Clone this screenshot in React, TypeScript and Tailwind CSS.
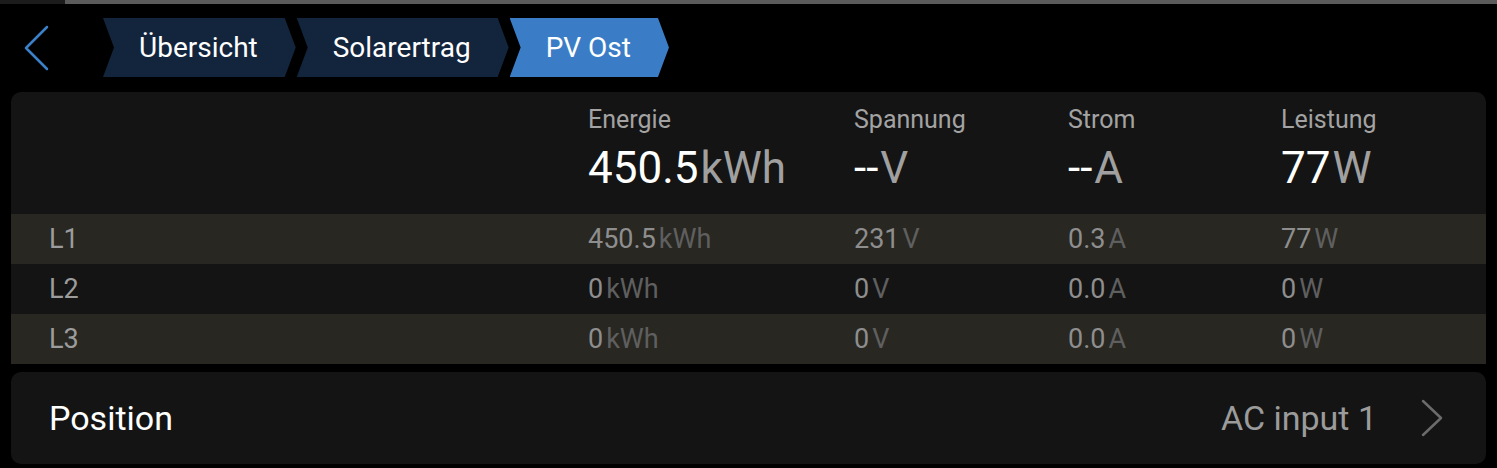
const CRUMBS = [
  { label: 'Übersicht', active: false },
  { label: 'Solarertrag', active: false },
  { label: 'PV Ost', active: true },
]

const COLS = [
  { label: 'Energie', value: '450.5', unit: 'kWh' },
  { label: 'Spannung', value: '--', unit: 'V' },
  { label: 'Strom', value: '--', unit: 'A' },
  { label: 'Leistung', value: '77', unit: 'W' },
]

const PHASES = [
  { name: 'L1', vals: [['450.5', 'kWh'], ['231', 'V'], ['0.3', 'A'], ['77', 'W']] },
  { name: 'L2', vals: [['0', 'kWh'], ['0', 'V'], ['0.0', 'A'], ['0', 'W']] },
  { name: 'L3', vals: [['0', 'kWh'], ['0', 'V'], ['0.0', 'A'], ['0', 'W']] },
]

const grid = 'grid grid-cols-[577px_266px_214px_213px_1fr]'

export default function App() {
  return (
    <main className="w-[1497px] h-[468px] bg-black overflow-hidden font-['Roboto',sans-serif]">
      {/* top scroll bar */}
      <div className="flex h-[4px]">
        <div className="w-[65px] bg-[#1c1c1c]" />
        <div className="flex-1 bg-[#5b5b5b]" />
      </div>

      <header className="flex items-center h-[59px] mt-[14px]">
        <div className="w-[103px] pl-[22px] flex items-center">
          <svg width="28" height="46" viewBox="0 0 28 46" fill="none">
            <path d="M25 2 L4 23 L25 44" stroke="#3b80c9" strokeWidth="2.5" strokeLinecap="round" strokeLinejoin="round" />
          </svg>
        </div>
        <nav className="flex h-full gap-[1px]">
          {CRUMBS.map((c) => (
            <div
              key={c.label}
              className={`flex items-center h-full pl-[36px] pr-[38px] text-[28px] text-white [clip-path:polygon(0_0,calc(100%_-_11px)_0,100%_50%,calc(100%_-_11px)_100%,0_100%,11px_50%)] ${c.active ? 'bg-[#3a7dc6]' : 'bg-[#13253c]'}`}
            >
              {c.label}
            </div>
          ))}
        </nav>
      </header>

      <section className="mx-[11px] mt-[15px] rounded-t-[10px] overflow-hidden bg-[#141414]">
        <div className={`${grid} h-[122px] pt-[14px]`}>
          <div />
          {COLS.map((c) => (
            <div key={c.label}>
              <div className="text-[25px] leading-[28px] text-[#a3a3a3]">{c.label}</div>
              <div className="mt-[8px] text-[44px] leading-[52px] text-white">
                {c.value}
                <span className="ml-[2px] text-[#a0a0a0]">{c.unit}</span>
              </div>
            </div>
          ))}
        </div>
        {PHASES.map((p, i) => (
          <div key={p.name} className={`${grid} h-[50px] items-center text-[27px] ${i % 2 === 0 ? 'bg-[#282722]' : 'bg-[#141414]'}`}>
            <div className="pl-[38px] text-[#9c9c9c]">{p.name}</div>
            {p.vals.map(([v, u], j) => (
              <div key={j} className="text-[#8e8e8e]">
                {v}
                <span className="ml-[3px] text-[#5f5f5f]">{u}</span>
              </div>
            ))}
          </div>
        ))}
      </section>

      <section className="mx-[11px] mt-[8px] h-[92px] rounded-[10px] bg-[#141414] flex items-center justify-between pl-[38px] pr-[42px]">
        <span className="text-[34px] text-white">Position</span>
        <div className="flex items-center gap-[43px]">
          <span className="text-[34px] text-[#9b9b9b]">AC input 1</span>
          <svg width="24" height="38" viewBox="0 0 24 38" fill="none">
            <path d="M3 2 L21 19 L3 36" stroke="#6b6b6b" strokeWidth="2.5" strokeLinecap="round" strokeLinejoin="round" />
          </svg>
        </div>
      </section>
    </main>
  )
}
